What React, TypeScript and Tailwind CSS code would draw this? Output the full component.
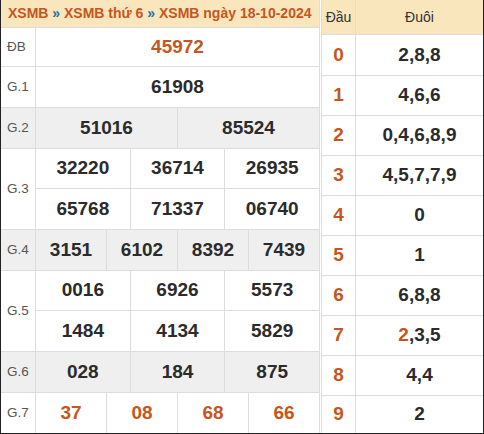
import React from "react";

const FONT = { fontFamily: '"Liberation Sans", Arial, sans-serif' };

type Prize = { label: string; rows: string[][]; gray?: boolean; red?: boolean; h?: string };

const prizes: Prize[] = [
  { label: "ĐB", rows: [["45972"]], red: true, h: "h-[38px]" },
  { label: "G.1", rows: [["61908"]] },
  { label: "G.2", rows: [["51016", "85524"]], gray: true },
  { label: "G.3", rows: [["32220", "36714", "26935"], ["65768", "71337", "06740"]] },
  { label: "G.4", rows: [["3151", "6102", "8392", "7439"]], gray: true },
  { label: "G.5", rows: [["0016", "6926", "5573"], ["1484", "4134", "5829"]] },
  { label: "G.6", rows: [["028", "184", "875"]], gray: true },
  { label: "G.7", rows: [["37", "08", "68", "66"]], red: true },
];

const loto: { head: string; tail: React.ReactNode }[] = [
  { head: "0", tail: "2,8,8" },
  { head: "1", tail: "4,6,6" },
  { head: "2", tail: "0,4,6,8,9" },
  { head: "3", tail: "4,5,7,7,9" },
  { head: "4", tail: "0" },
  { head: "5", tail: "1" },
  { head: "6", tail: "6,8,8" },
  { head: "7", tail: (<><span className="text-[#c6561d]">2</span>,3,5</>) },
  { head: "8", tail: "4,4" },
  { head: "9", tail: "2" },
];

function PrizeRow({ p, last }: { p: Prize; last: boolean }) {
  return (
    <div className={`flex ${last ? "" : "border-b border-[#dddddd]"} ${p.gray ? "bg-[#efefef]" : "bg-white"}`}>
      <div className="w-[35px] border-r border-[#dddddd] flex items-center pl-[6px] text-[13.5px] text-[#555555]">
        {p.label}
      </div>
      <div className="flex-1 flex flex-col">
        {p.rows.map((r, i) => (
          <div
            key={i}
            className={`flex ${i < p.rows.length - 1 ? "h-[40px] border-b border-[#dddddd]" : p.h ?? "h-[40px]"} ${
              i < p.rows.length - 1 ? "" : p.rows.length > 1 ? "h-[39px]" : ""
            }`}
          >
            {r.map((n, j) => (
              <div
                key={j}
                className={`flex-1 flex items-center justify-center text-[19px] font-bold ${
                  j > 0 ? "border-l border-[#dddddd]" : ""
                } ${p.red ? "text-[#c6561d]" : "text-[#2b2b2b]"}`}
              >
                {n}
              </div>
            ))}
          </div>
        ))}
      </div>
    </div>
  );
}

export default function App() {
  return (
    <div style={FONT} className="w-[484px] h-[434px] flex border-l border-r border-b border-[#222222] bg-white">
      {/* Prize table */}
      <div className="w-[319px] border-r border-[#dddddd] flex flex-col">
        <div className="h-[35px] bg-[#f9e6bd] border-b border-[#dddddd] flex items-center pl-[7px] text-[14px] font-bold text-[#c6561d] whitespace-nowrap">
          <span>
            XSMB <span className="text-[#1f6fb5]">»</span> XSMB thứ 6{" "}
            <span className="text-[#1f6fb5]">»</span> XSMB ngày 18-10-2024
          </span>
        </div>
        {prizes.map((p, i) => (
          <PrizeRow key={p.label} p={p} last={i === prizes.length - 1} />
        ))}
      </div>

      {/* Loto table */}
      <div className="ml-[1px] w-[162px] border-l border-[#dddddd] flex flex-col">
        <div className="h-[35px] bg-[#f9e6bd] border-b border-[#dddddd] flex text-[14px] text-[#333333]">
          <div className="w-[34px] border-r border-[#dddddd] flex items-center justify-center">Đầu</div>
          <div className="flex-1 flex items-center justify-center">Đuôi</div>
        </div>
        {loto.map((r, i) => (
          <div
            key={r.head}
            className={`flex ${i === 0 ? "h-[41px]" : i === 9 ? "h-[37px]" : "h-[40px]"} ${
              i < 9 ? "border-b border-[#dddddd]" : ""
            }`}
          >
            <div className="w-[34px] border-r border-[#dddddd] flex items-center justify-center text-[19px] font-bold text-[#c6561d]">
              {r.head}
            </div>
            <div className="flex-1 flex items-center justify-center text-[19px] font-bold text-[#2b2b2b]">
              {r.tail}
            </div>
          </div>
        ))}
      </div>
    </div>
  );
}
